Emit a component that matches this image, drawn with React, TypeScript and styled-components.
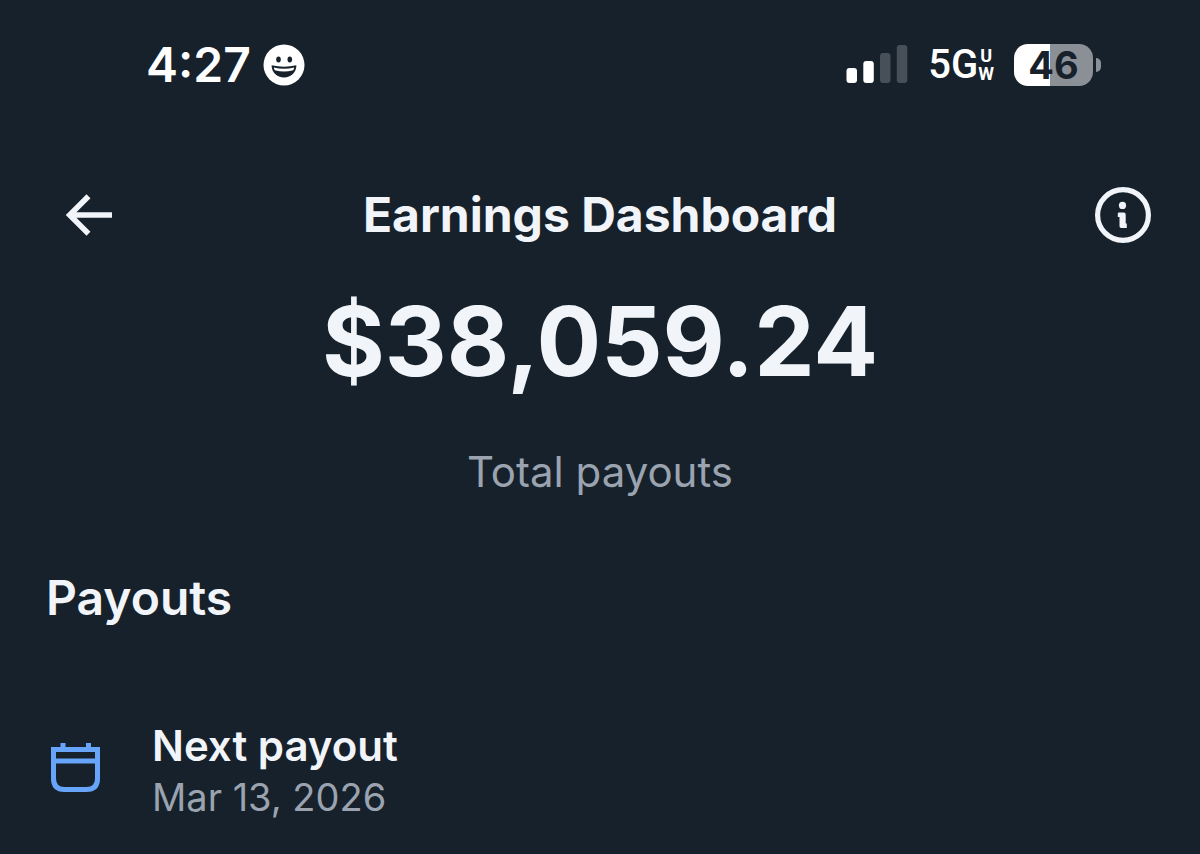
import React from "react";
import styled, { createGlobalStyle } from "styled-components";

const GlobalStyle = createGlobalStyle`
  *, *::before, *::after { box-sizing: border-box; }
  body {
    margin: 0;
    background: #16212b;
    color: #f1f4f8;
    font-family: Inter, "Liberation Sans", sans-serif;
    -webkit-font-smoothing: antialiased;
  }
  h1, h2, h3, p { margin: 0; }
`;

const Screen = styled.div`
  display: flex;
  flex-direction: column;
  min-height: 100vh;
  background: #16212b;
`;

const StatusBar = styled.div`
  display: flex;
  align-items: center;
  justify-content: space-between;
  height: 130px;
  padding: 0 99px 0 146px;
  color: #ffffff;
`;

const StatusGroup = styled.div<{ $gap: number }>`
  display: flex;
  align-items: center;
  gap: ${({ $gap }) => $gap}px;
`;

const Clock = styled.time`
  font-size: 48px;
  line-height: 60px;
  font-weight: 600;
`;

const Network = styled.div`
  display: flex;
  align-items: center;
  font-family: Roboto, "Liberation Sans", sans-serif;
  font-size: 40px;
  line-height: 48px;
  font-weight: 500;
`;

const NetworkSuffix = styled.span`
  display: flex;
  flex-direction: column;
  align-items: center;
  font-size: 18px;
  line-height: 18px;
  font-weight: 700;
`;

const Battery = styled.div`
  display: flex;
  align-items: center;
  gap: 3px;
`;

const BatteryBody = styled.div`
  display: flex;
  align-items: center;
  justify-content: center;
  width: 79px;
  height: 42px;
  border-radius: 14px;
  background: linear-gradient(to right, #ffffff 46%, #8b9096 46%);
  color: #16212b;
  font-size: 38px;
  line-height: 42px;
  font-weight: 700;
`;

const BatteryTip = styled.div`
  width: 5px;
  height: 14px;
  border-radius: 0 5px 5px 0;
  background: #8b9096;
`;

const Header = styled.header`
  display: grid;
  grid-template-columns: 80px 1fr 80px;
  align-items: center;
  height: 170px;
  padding: 0 49px;
`;

const IconButton = styled.button<{ $align: "center" | "flex-end" }>`
  display: flex;
  align-items: center;
  justify-content: ${({ $align }) => $align};
  height: 56px;
  padding: 0;
  border: 0;
  background: transparent;
  color: #f1f4f8;
  cursor: pointer;
`;

const Title = styled.h1`
  font-size: 48px;
  line-height: 60px;
  font-weight: 700;
  text-align: center;
`;

const Summary = styled.section`
  display: flex;
  flex-direction: column;
  align-items: center;
  gap: 62px;
`;

const Amount = styled.p`
  font-size: 96px;
  line-height: 82px;
  font-weight: 700;
`;

const Caption = styled.p`
  color: #9aa3af;
  font-size: 42px;
  line-height: 56px;
`;

const Payouts = styled.section`
  display: flex;
  flex-direction: column;
  gap: 92px;
  padding: 68px 46px 32px;
`;

const SectionTitle = styled.h2`
  font-size: 48px;
  line-height: 60px;
  font-weight: 600;
`;

const PayoutRow = styled.div`
  display: flex;
  align-items: center;
  gap: 48px;
`;

const PayoutText = styled.div`
  display: flex;
  flex-direction: column;
`;

const PayoutTitle = styled.h3`
  font-size: 42px;
  line-height: 52px;
  font-weight: 600;
`;

const PayoutDate = styled.time`
  color: #9aa3af;
  font-size: 38px;
  line-height: 50px;
`;

const SmileIcon = () => (
  <svg width="42" height="42" viewBox="0 0 42 42" aria-hidden="true">
    <circle cx="21" cy="21" r="20.5" fill="#fff" />
    <ellipse cx="15.5" cy="15.5" rx="2.3" ry="2.9" fill="#16212b" />
    <ellipse cx="26.8" cy="15.5" rx="2.3" ry="2.9" fill="#16212b" />
    <path d="M8.6 21.3Q21 24.2 33.4 21.3C33.4 28.5 28 33.4 21 33.4S8.6 28.5 8.6 21.3Z" fill="#16212b" />
    <path d="M10.8 23.4Q21 26 31.2 23.4Q30.9 25.2 30.2 26.2Q21 28.8 11.8 26.2Q11 25 10.8 23.4Z" fill="#fff" />
  </svg>
);

const SignalIcon = () => (
  <svg width="62" height="42" viewBox="0 0 62 42" role="img" aria-label="Signal: 2 of 4 bars">
    <rect x="0.5" y="24" width="10.5" height="15" rx="3" fill="#fff" />
    <rect x="17.3" y="17" width="10.5" height="22" rx="3" fill="#fff" />
    <rect x="34" y="9" width="10.5" height="30" rx="3" fill="#474f59" />
    <rect x="50.8" y="1" width="10.5" height="38" rx="3" fill="#474f59" />
  </svg>
);

const BackIcon = () => (
  <svg width="48" height="44" viewBox="0 0 48 44" fill="none" stroke="currentColor" strokeWidth="5.6" aria-hidden="true">
    <path d="M47 22H5M23.5 3.2L4.7 22L23.5 40.8" />
  </svg>
);

const InfoIcon = () => (
  <svg width="56" height="56" viewBox="0 0 56 56" aria-hidden="true">
    <circle cx="28" cy="28" r="25.4" fill="none" stroke="currentColor" strokeWidth="5.2" />
    <circle cx="27.5" cy="18.4" r="3.6" fill="currentColor" />
    <path
      d="M24 25.5H28.8Q30.7 25.5 30.7 27.4V36.4H31.8V40.9H26.2Q24.5 40.9 24.5 39.2V30H22.8V26.7Q22.8 25.5 24 25.5Z"
      fill="currentColor"
    />
  </svg>
);

const CalendarIcon = () => (
  <svg width="58" height="66" viewBox="0 0 58 66" fill="none" stroke="#67a5fb" strokeWidth="5" aria-hidden="true">
    <path d="M7.5 11.5H51.5V40.5Q51.5 51.5 40.5 51.5H18.5Q7.5 51.5 7.5 40.5ZM7.5 23H51.5M17 5V12M42.5 5V12" />
  </svg>
);

export default function App() {
  return (
    <Screen>
      <GlobalStyle />
      <StatusBar>
        <StatusGroup $gap={12}>
          <Clock>4:27</Clock>
          <SmileIcon />
        </StatusGroup>
        <StatusGroup $gap={20}>
          <SignalIcon />
          <Network>
            5G
            <NetworkSuffix>
              <span>U</span>
              <span>W</span>
            </NetworkSuffix>
          </Network>
          <Battery>
            <BatteryBody>46</BatteryBody>
            <BatteryTip />
          </Battery>
        </StatusGroup>
      </StatusBar>
      <Header>
        <IconButton type="button" aria-label="Back" $align="center">
          <BackIcon />
        </IconButton>
        <Title>Earnings Dashboard</Title>
        <IconButton type="button" aria-label="Information" $align="flex-end">
          <InfoIcon />
        </IconButton>
      </Header>
      <main>
        <Summary>
          <Amount>$38,059.24</Amount>
          <Caption>Total payouts</Caption>
        </Summary>
        <Payouts>
          <SectionTitle>Payouts</SectionTitle>
          <PayoutRow>
            <CalendarIcon />
            <PayoutText>
              <PayoutTitle>Next payout</PayoutTitle>
              <PayoutDate dateTime="2026-03-13">Mar 13, 2026</PayoutDate>
            </PayoutText>
          </PayoutRow>
        </Payouts>
      </main>
    </Screen>
  );
}
